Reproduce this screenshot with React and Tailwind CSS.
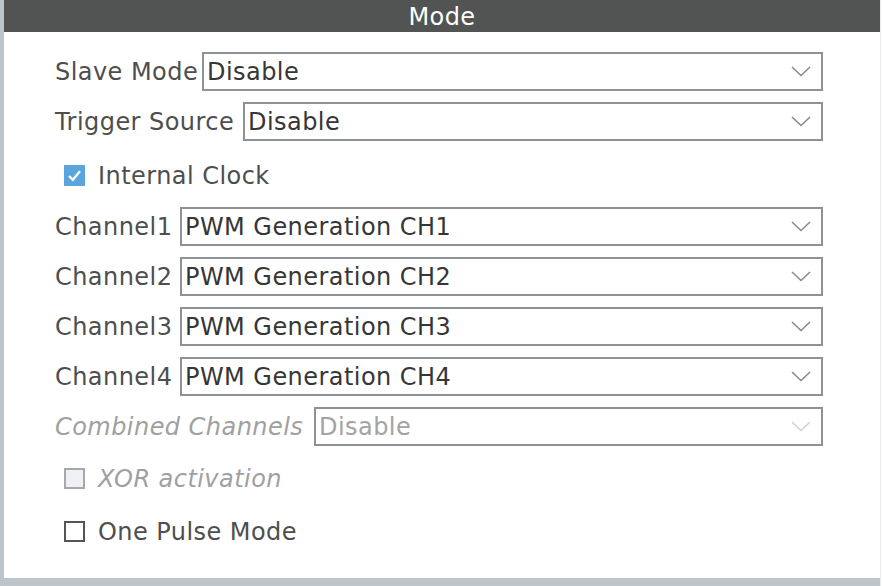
import React from "react";

const font = { fontFamily: '"DejaVu Sans", "Liberation Sans", sans-serif' };

function Chevron({ color }) {
  return (
    <svg width="20" height="11" viewBox="0 0 20 11" className="shrink-0 mr-[10px]">
      <polyline points="1,1 10,9.5 19,1" fill="none" stroke={color} strokeWidth="1.6" />
    </svg>
  );
}

function Select({ value, disabled }) {
  return (
    <div className="flex-1 h-[39px] border-2 border-[#8e9196] bg-white flex items-center mr-[57px]">
      <span className={"flex-1 pl-[3px] leading-none " + (disabled ? "text-[#a3a3a3]" : "text-[#363636]")}>{value}</span>
      <Chevron color={disabled ? "#d2d2d2" : "#8a8a8a"} />
    </div>
  );
}

function Row({ label, value, disabled, labelW, className }) {
  return (
    <div className={"flex items-center " + className}>
      <span className={"whitespace-nowrap shrink-0 " + labelW + " " + (disabled ? "italic text-[#a0a0a0]" : "text-[#4e4e4e]")}>{label}</span>
      <Select value={value} disabled={disabled} />
    </div>
  );
}

function Check({ label, state, className }) {
  let box;
  if (state === "checked") {
    box = (
      <div className="w-[21px] h-[21px] bg-[#5aa6dc] flex items-center justify-center">
        <svg width="15" height="13" viewBox="0 0 15 13">
          <polyline points="2,7 5.8,10.8 13,2.2" fill="none" stroke="white" strokeWidth="2.3" />
        </svg>
      </div>
    );
  } else if (state === "disabled") {
    box = <div className="w-[21px] h-[21px] bg-[#eef0f3] border-2 border-[#a5a9ad]" />;
  } else {
    box = <div className="w-[21px] h-[21px] bg-white border-2 border-[#555555]" />;
  }
  return (
    <div className={"flex items-center ml-[9px] h-[21px] " + className}>
      {box}
      <span className={"ml-[13px] leading-none " + (state === "disabled" ? "italic text-[#a0a0a0]" : "text-[#4e4e4e]")}>{label}</span>
    </div>
  );
}

export default function App() {
  return (
    <div className="w-[882px] h-[586px] flex bg-white text-[24px] tracking-[0.45px]" style={font}>
      <div className="w-[4px] h-full bg-[#bdc4ca]" />
      <div className="w-[876px] h-full flex flex-col">
        <div className="h-[32px] bg-[#525453] text-white flex items-center justify-center leading-none pt-[1px]">Mode</div>
        <div className="flex-1 bg-white flex flex-col pl-[51px] pt-[20px]">
          <Row label="Slave Mode" value="Disable" labelW="w-[147px]" className="" />
          <Row label="Trigger Source" value="Disable" labelW="w-[188px]" className="mt-[11px]" />
          <Check label="Internal Clock" state="checked" className="mt-[24px]" />
          <Row label="Channel1" value="PWM Generation CH1" labelW="w-[125px]" className="mt-[21px]" />
          <Row label="Channel2" value="PWM Generation CH2" labelW="w-[125px]" className="mt-[11px]" />
          <Row label="Channel3" value="PWM Generation CH3" labelW="w-[125px]" className="mt-[11px]" />
          <Row label="Channel4" value="PWM Generation CH4" labelW="w-[125px]" className="mt-[11px]" />
          <Row label="Combined Channels" value="Disable" labelW="w-[259px]" disabled className="mt-[11px]" />
          <Check label="XOR activation" state="disabled" className="mt-[22px]" />
          <Check label="One Pulse Mode" state="unchecked" className="mt-[32px]" />
        </div>
        <div className="h-[8px] bg-[#bdc4ca]" />
      </div>
      <div className="w-[2px] h-full border-l border-[#ececec] bg-white" />
    </div>
  );
}
